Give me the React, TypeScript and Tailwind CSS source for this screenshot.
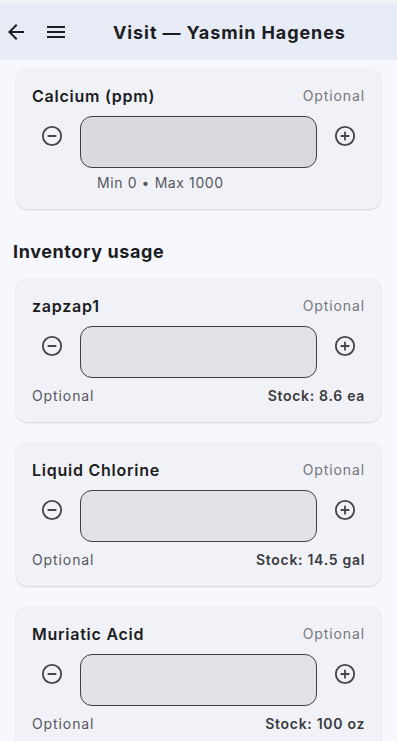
import { CircleMinus, CirclePlus } from 'lucide-react'

const font = { fontFamily: 'Inter, "Noto Sans", sans-serif' }

interface StepperProps {
  filled?: boolean
}

function Stepper({ filled }: StepperProps) {
  return (
    <div className="flex items-start gap-2">
      <button className="flex h-10 w-10 items-center justify-center text-[#45464c]">
        <CircleMinus className="h-[22px] w-[22px]" strokeWidth={2} />
      </button>
      <div
        className={`h-[52px] flex-1 rounded-xl border border-[#3e3f45] ${
          filled ? 'bg-[#d9dade]' : 'bg-[#e2e3e8]'
        }`}
      />
      <button className="flex h-10 w-10 items-center justify-center text-[#45464c]">
        <CirclePlus className="h-[22px] w-[22px]" strokeWidth={2} />
      </button>
    </div>
  )
}

const items = [
  { name: 'zapzap1', stock: 'Stock: 8.6 ea' },
  { name: 'Liquid Chlorine', stock: 'Stock: 14.5 gal' },
  { name: 'Muriatic Acid', stock: 'Stock: 100 oz' },
]

export default function App() {
  return (
    <div className="min-h-screen bg-[#f7f8fd] text-[#1c1d22]" style={font}>
      <div className="h-1 bg-[#f1f1f3]" />
      {/* Header */}
      <div className="flex h-14 items-center bg-[#e7ebf5] pl-1 pr-4">
        <button className="flex h-6 w-6 items-center justify-center">
          <svg viewBox="0 0 24 24" className="h-6 w-6 fill-[#1c1d22]">
            <path d="M20 11H7.83l5.59-5.59L12 4l-8 8 8 8 1.41-1.41L7.83 13H20v-2z" />
          </svg>
        </button>
        <button className="ml-4 flex h-6 w-6 items-center justify-center">
          <svg viewBox="0 0 24 24" className="h-6 w-6 fill-[#1c1d22]">
            <path d="M3 18h18v-2H3v2zm0-5h18v-2H3v2zm0-7v2h18V6H3z" />
          </svg>
        </button>
        <h1 className="mt-0.5 ml-[45px] text-lg font-bold tracking-[0.9px]">Visit — Yasmin Hagenes</h1>
      </div>

      <div className="px-4 pt-2">
        {/* Calcium card */}
        <div className="rounded-xl bg-[#f1f2f7] px-4 pt-4 pb-4 shadow-[0_1px_2px_rgba(0,0,0,0.15)]">
          <div className="mb-2 flex items-center justify-between">
            <span className="text-base leading-6 font-semibold tracking-[0.75px]">Calcium (ppm)</span>
            <span className="text-sm tracking-[0.9px] text-[#75777d]">Optional</span>
          </div>
          <Stepper filled />
          <p className="mt-[5px] pl-[65px] text-sm leading-5 tracking-[0.6px] text-[#55575d]">
            Min 0 • Max 1000
          </p>
        </div>

        <h2 className="-mx-[3px] mt-[29px] mb-3 text-lg leading-7 font-bold tracking-[0.6px]">
          Inventory usage
        </h2>

        <div className="flex flex-col gap-5">
          {items.map((item) => (
            <div
              key={item.name}
              className="rounded-xl bg-[#f1f2f7] px-4 pt-4 pb-4 shadow-[0_1px_2px_rgba(0,0,0,0.15)]"
            >
              <div className="mb-2 flex items-center justify-between">
                <span className="text-base leading-6 font-semibold tracking-[0.75px]">{item.name}</span>
                <span className="text-sm tracking-[0.9px] text-[#75777d]">Optional</span>
              </div>
              <Stepper />
              <div className="mt-2 flex items-center justify-between text-sm leading-5">
                <span className="tracking-[0.9px] text-[#55575d]">Optional</span>
                <span className="font-semibold tracking-[0.7px] text-[#3a3b40]">{item.stock}</span>
              </div>
            </div>
          ))}
        </div>
      </div>
    </div>
  )
}
